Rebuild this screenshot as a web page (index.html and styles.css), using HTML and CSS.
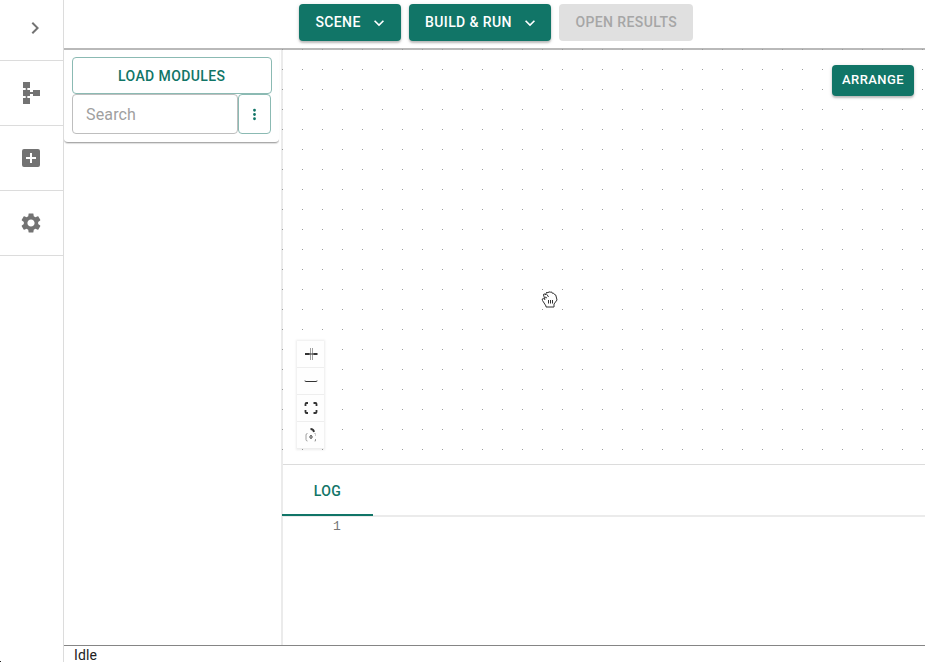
FILE: index.html
```html
<!DOCTYPE html>
<html lang="en">
<head>
<meta charset="utf-8">
<title>Scene Editor</title>
<link rel="stylesheet" href="styles.css">
</head>
<body>
<div class="app">
  <nav class="rail">
    <a class="rail-item first"><svg class="chevron-right" viewBox="0 0 24 24"><path d="M10 6 8.59 7.41 13.17 12l-4.58 4.59L10 18l6-6z"/></svg></a>
    <a class="rail-item"><svg viewBox="0 0 24 24"><path d="M4 1h7v6H8.300v2H11v2h3V9h7v6h-7v-2h-3v2H8.300v2H11v6H4v-6h2.700v-2H4V9h2.700V7H4z"/></svg></a>
    <a class="rail-item"><svg viewBox="0 0 24 24"><path d="M19 3H5a2 2 0 0 0-2 2v14a2 2 0 0 0 2 2h14a2 2 0 0 0 2-2V5a2 2 0 0 0-2-2zm-2 10h-4v4h-2v-4H7v-2h4V7h2v4h4z"/></svg></a>
    <a class="rail-item"><svg viewBox="0 0 24 24"><path d="M19.14 12.94c.04-.3.06-.61.06-.94 0-.32-.02-.64-.07-.94l2.03-1.58c.18-.14.23-.41.12-.61l-1.92-3.32c-.12-.22-.37-.29-.59-.22l-2.39.96c-.5-.38-1.03-.7-1.62-.94l-.36-2.54c-.04-.24-.24-.41-.48-.41h-3.84c-.24 0-.43.17-.47.41l-.36 2.54c-.59.24-1.13.57-1.62.94l-2.39-.96c-.22-.08-.47 0-.59.22L2.74 8.87c-.12.21-.08.47.12.61l2.03 1.58c-.05.3-.09.63-.09.94s.02.64.07.94l-2.03 1.58c-.18.14-.23.41-.12.61l1.92 3.32c.12.22.37.29.59.22l2.39-.96c.5.38 1.03.7 1.62.94l.36 2.54c.05.24.24.41.48.41h3.84c.24 0 .44-.17.47-.41l.36-2.54c.59-.24 1.13-.56 1.62-.94l2.39.96c.22.08.47 0 .59-.22l1.92-3.32c.12-.22.07-.47-.12-.61zM12 15.6c-1.98 0-3.6-1.62-3.6-3.6s1.62-3.6 3.6-3.6 3.6 1.62 3.6 3.6-1.62 3.6-3.6 3.6z"/></svg></a>
  </nav>
  <div class="workspace">
    <header class="toolbar">
      <button class="btn scene">SCENE <svg viewBox="0 0 24 24"><path d="M7.41 8.59 12 13.17l4.59-4.58L18 10l-6 6-6-6z"/></svg></button>
      <button class="btn build">BUILD &amp; RUN <svg viewBox="0 0 24 24"><path d="M7.41 8.59 12 13.17l4.59-4.58L18 10l-6 6-6-6z"/></svg></button>
      <button class="btn results" disabled>OPEN RESULTS</button>
    </header>
    <div class="content">
      <aside class="modules">
        <div class="module-card">
          <button class="load">LOAD MODULES</button>
          <div class="search-row">
            <input class="search" placeholder="Search" aria-label="Search">
            <button class="more" aria-label="More"><svg viewBox="0 0 24 24"><path d="M12 8a2 2 0 1 0 0-4 2 2 0 0 0 0 4zm0 2a2 2 0 1 0 0 4 2 2 0 0 0 0-4zm0 6a2 2 0 1 0 0 4 2 2 0 0 0 0-4z"/></svg></button>
          </div>
        </div>
      </aside>
      <main class="main">
        <section class="canvas">
          <svg class="grid"><defs><pattern id="dots" width="20" height="20" patternUnits="userSpaceOnUse"><rect width="1" height="1"/></pattern></defs><rect width="100%" height="100%" fill="url(#dots)"/></svg>
          <button class="arrange">ARRANGE</button>
          <div class="controls">
            <button aria-label="Zoom in"><svg viewBox="0 0 14 14"><path class="thick" d="M1 7h4.500M9.500 7H13.500"/><path class="hair" d="M6.500 1v12M8.500 1v12"/><path d="M5 7h5"/></svg></button>
            <button aria-label="Zoom out"><svg viewBox="0 0 14 14"><path d="M1 6.500v.5q0 .5.500.5h11q.5 0 .5-.5v-.5"/></svg></button>
            <button aria-label="Fit view"><svg viewBox="0 0 14 14"><path class="thick" d="M1.500 5V3q0-1 1-1H4M9.500 2h2q1 0 1 1v2M12.500 9v2q0 1-1 1h-2M4 12H2.500q-1 0-1-1V9"/></svg></button>
            <button aria-label="Lock"><svg viewBox="0 0 14 14"><path class="thick" d="M6.500 1q3 0 3.500 3"/><path class="hair" d="M3.500 5.500Q2 5.500 2 7v4.500Q2 13 3.500 13M10.500 5.500h1M11.500 6.500v1M11.500 11v2h-1"/><path d="M7 7.200 8.300 9 7 10.700 5.700 9z"/></svg></button>
          </div>
          <svg class="hand" viewBox="0 0 18 18"><path d="M5 16 1.500 10.500q-1-2 .8-2l1.700 1L2.500 5q0-1.500 1.500-1l1 1L5 3q1-1.500 2 0 .5-2 2.200-.8 1.800-1 2 1 1.800-.5 2.300 1.300 1.500 0 1.500 1.500L16 10l-3 4v3H5z"/><path d="m4 7 2 1M6 4.500 7.500 7M7.500 10v3.500M9.500 10v3.500M11.500 10v3.500"/></svg>
        </section>
        <section class="log">
          <div class="tabs"><span class="tab">LOG</span></div>
          <div class="editor"><span class="line-number">1</span></div>
        </section>
      </main>
    </div>
    <footer class="status">Idle</footer>
  </div>
</div>
</body>
</html>
```
FILE: styles.css
```css
* { box-sizing: border-box; }
body { margin: 0; background: #fff; font-family: Roboto, sans-serif; overflow: hidden; }
button { font: 500 14px/24px Roboto, sans-serif; letter-spacing: .4px; padding: 0; border: 0; }
svg { display: block; }
.app { display: flex; width: 925px; height: 662px; }
.rail { width: 64px; border-right: 1px solid #dcdcdc; position: relative; }
.rail::after { content: ""; position: absolute; left: 0; bottom: 0; width: 1px; height: 1px; background: #222; }
.rail-item { display: flex; align-items: center; height: 65px; padding-left: 19px; border-bottom: 1px solid #dcdcdc; }
.rail-item.first { height: 61px; padding: 0 0 4px 23px; }
.rail-item svg { width: 24px; height: 24px; fill: #737373; }
.workspace { flex: 1; min-width: 0; display: flex; flex-direction: column; }
.toolbar { height: 50px; display: flex; gap: 8px; align-items: flex-start; padding: 4px 0 0 235.4px; border-bottom: 2px solid #b9b9b9; }
.btn { height: 36.5px; display: flex; align-items: center; padding-left: 16px; color: #fff; background: #117567; border-radius: 4px; box-shadow: 0 2px 2px #0003, 0 1px 4px #0002; }
.btn svg { width: 20px; height: 20px; margin: 1px 0 0 8px; fill: currentColor; }
.scene { width: 101.6px; }
.build { width: 142.4px; }
.results { width: 134px; color: #a6a6a6; background: #e0e0e0; box-shadow: none; }
.content { flex: 1; min-height: 0; display: flex; }
.modules { width: 219px; border-right: 2px solid #ebebeb; }
.module-card { width: 215px; height: 93px; padding: 7px 8px 0; border-bottom: 1px solid #aaa; border-radius: 0 0 4px 4px; box-shadow: 0 1px 1px #0002; }
.load { display: block; width: 199.5px; height: 37px; color: #117567; background: #fff; border: 1px solid #8bbab3; border-radius: 4px; }
.search-row { display: flex; }
.search { width: 166px; height: 40px; padding: 0 13px; font: 16px Roboto, sans-serif; letter-spacing: .15px; border: 1px solid #bebebe; border-radius: 4px; outline: 0; }
.search::placeholder { color: #a0a0a0; opacity: 1; }
.more { width: 33.5px; display: flex; align-items: center; justify-content: center; background: #fff; border: 1px solid #8bbab3; border-radius: 4px; }
.more svg { width: 17px; height: 17px; fill: #117567; }
.main { flex: 1; min-width: 0; display: flex; flex-direction: column; }
.canvas { height: 415px; position: relative; border-bottom: 1px solid #dcdcdc; }
.grid { position: absolute; left: -1px; top: -1px; width: 643px; height: 401px; fill: #999; }
.arrange { position: absolute; top: 15px; right: 11px; width: 82px; height: 30.5px; padding-bottom: 1px; font-size: 13px; color: #fff; background: #117567; border-radius: 4px; box-shadow: 0 2px 2px #0003, 0 1px 4px #0002; }
.controls { position: absolute; left: 14px; top: 291px; width: 27px; display: flex; flex-direction: column; box-shadow: 0 0 2px 1px #00000014; }
.controls button { height: 27px; display: flex; align-items: center; justify-content: center; background: #fefefe; border-bottom: 1px solid #eee; }
.controls svg { width: 14px; height: 14px; margin-right: 0; fill: none; stroke: #333; stroke-width: 1; }
.controls .thick { stroke-width: 1.8; }
.controls .hair { stroke: #888; stroke-width: .8; }
.hand { position: absolute; left: 258px; top: 240px; width: 18px; height: 18px; fill: #fff; stroke: #333; stroke-width: 1; }
.log { flex: 1; }
.tabs { height: 52px; margin-left: -1px; border-bottom: 2px solid #ebebeb; position: relative; }
.tab { display: block; width: 91px; height: 51px; color: #117567; border-bottom: 2px solid #117567; font-size: 14px; font-weight: 500; line-height: 53px; text-align: center; letter-spacing: .4px; }
.editor { padding: 1px 0 0 50px; }
.line-number { display: block; width: 8px; font: 13px/18px "Liberation Mono", monospace; color: #777; }
.status { height: 17px; border-top: 1px solid #858585; padding-left: 10px; font-size: 14px; line-height: 19px; letter-spacing: .15px; color: #222; }
```
